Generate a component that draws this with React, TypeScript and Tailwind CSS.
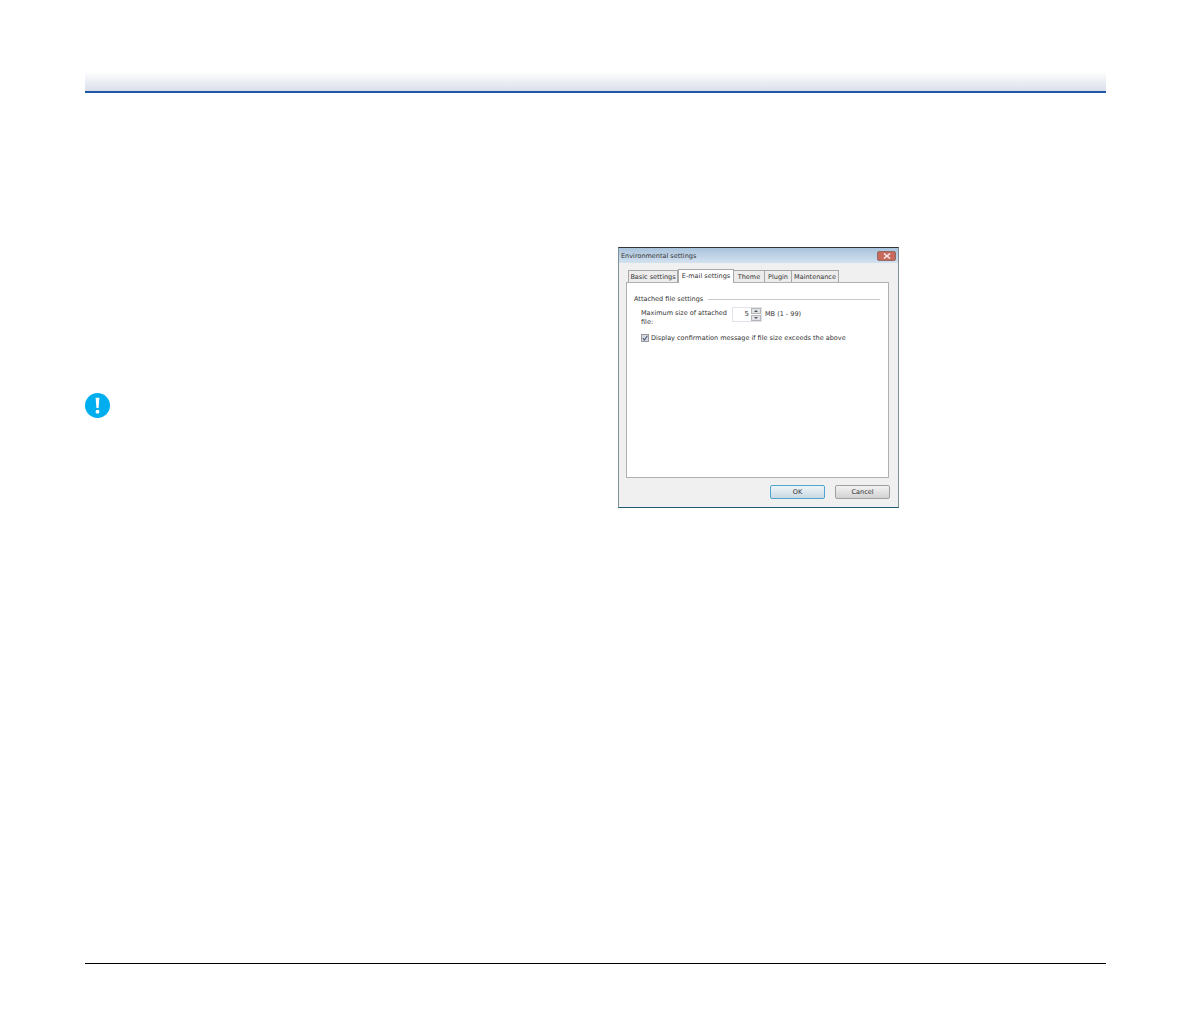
const tabs = [
  { label: "Theme", w: "w-[31px]" },
  { label: "Plugin", w: "w-[27px]" },
  { label: "Maintenance", w: "w-[47px]" },
];

const SettingsDialog = () => {
  return (
    <div className="w-[281px] h-[261px] flex flex-col bg-[#f0f0f0] border border-[#7f8f96] border-t-[#333] border-b-[#1d5a6e] text-[6.5px] leading-[8px] whitespace-nowrap text-[#333] font-['DejaVu_Sans',sans-serif]">
      <div className="h-[15px] shrink-0 flex items-center justify-between pl-[2px] pr-[2px] bg-gradient-to-b from-[#a9c3dc] to-[#d3e2ef]">
        <span>Environmental settings</span>
        <div className="w-[19px] h-[10px] rounded-[2px] bg-[#c8695c] border border-[#8f6a66] flex items-center justify-center">
          <svg width="8" height="6" viewBox="0 0 8 6">
            <path d="M1 0.5 L7 5.5 M7 0.5 L1 5.5" stroke="#f4e6e4" strokeWidth="1.6" />
          </svg>
        </div>
      </div>

      <div className="flex-1 flex flex-col pl-[7px] pr-[9px] pt-[5px] pb-[8px]">
        <div className="flex items-end h-[14px] pl-[2px]">
          <div className="w-[50px] h-[12px] flex items-center justify-center bg-[#ececec] border border-[#a8a8a8] border-b-0">
            Basic settings
          </div>
          <div className="w-[56px] h-[14px] -mb-px z-10 flex items-center justify-center pb-[2px] bg-white border border-[#a8a8a8] border-b-0">
            E-mail settings
          </div>
          {tabs.map((tab) => (
            <div
              key={tab.label}
              className={`${tab.w} h-[12px] flex items-center justify-center bg-[#ececec] border border-l-0 border-[#a8a8a8] border-b-0`}
            >
              {tab.label}
            </div>
          ))}
        </div>

        <div className="h-[196px] bg-white border border-[#b0b0b0] pl-[7px] pr-[8px] pt-[12px]">
          <div className="flex items-center gap-[5px]">
            <span>Attached file settings</span>
            <div className="flex-1 h-px bg-[#c8c8c8]" />
          </div>
          <div className="flex pl-[7px] mt-[4px] h-[18px]">
            <span className="w-[91px] pt-[2px] leading-[9px]">
              Maximum size of attached
              <br />
              file:
            </span>
            <div className="w-[30px] h-[15px] flex justify-end border border-[#e2e3ea]">
              <span className="pt-[2px] pr-[2px] text-[7px]">5</span>
              <div className="w-[10px] flex flex-col gap-px">
                <div className="flex-1 flex items-center justify-center bg-[#dfe3e8] border border-[#b5b5b5]">
                  <div className="border-x-[2px] border-x-transparent border-b-[2px] border-b-[#555]" />
                </div>
                <div className="flex-1 flex items-center justify-center bg-[#dfe3e8] border border-[#b5b5b5]">
                  <div className="border-x-[2px] border-x-transparent border-t-[2px] border-t-[#555]" />
                </div>
              </div>
            </div>
            <span className="ml-[3px] pt-[3px]">MB (1 - 99)</span>
          </div>
          <div className="flex items-center pl-[7px] mt-[9px] gap-[2px]">
            <div className="w-[8px] h-[8px] flex items-center justify-center bg-[#d5d9e2] border border-[#9a9a9a]">
              <svg width="6" height="6" viewBox="0 0 6 6">
                <path d="M0.8 3 L2.4 5 L5.4 0.8" stroke="#4a5a78" strokeWidth="1.1" fill="none" />
              </svg>
            </div>
            <span>Display confirmation message if file size exceeds the above</span>
          </div>
        </div>

        <div className="flex justify-end gap-[10px] mt-[7px] -mr-px">
          <button className="w-[55px] h-[14px] rounded-[2px] border border-[#4fa5cf] bg-gradient-to-b from-[#eef5f9] to-[#c9d9e3] text-[6.5px] leading-[8px] text-[#333]">
            OK
          </button>
          <button className="w-[55px] h-[14px] rounded-[2px] border border-[#a0a0a0] bg-gradient-to-b from-[#f2f2f2] to-[#d2d2d2] text-[6.5px] leading-[8px] text-[#333]">
            Cancel
          </button>
        </div>
      </div>
    </div>
  );
};

const App = () => {
  return (
    <div className="w-[1190px] h-[1020px] bg-white px-[85px] pt-[72px] flex flex-col overflow-hidden">
      <div className="w-[1021px] h-[21px] shrink-0 bg-gradient-to-b from-white to-[#d9dfea] border-b-2 border-[#1f57a6]" />

      <div className="h-[870px] shrink-0 flex">
        <div className="w-[533px] pt-[300px]">
          <svg width="25" height="25" viewBox="0 0 26 26">
            <circle cx="13" cy="13" r="13" fill="#00aeef" />
            <path d="M11 5 H15 L14.1 15.5 H11.9 Z" fill="#ffffff" />
            <circle cx="13" cy="19.5" r="2" fill="#ffffff" />
          </svg>
        </div>
        <div className="pt-[154px]">
          <SettingsDialog />
        </div>
      </div>

      <div className="w-[1021px] h-px bg-black" />
    </div>
  );
};

export default App;
